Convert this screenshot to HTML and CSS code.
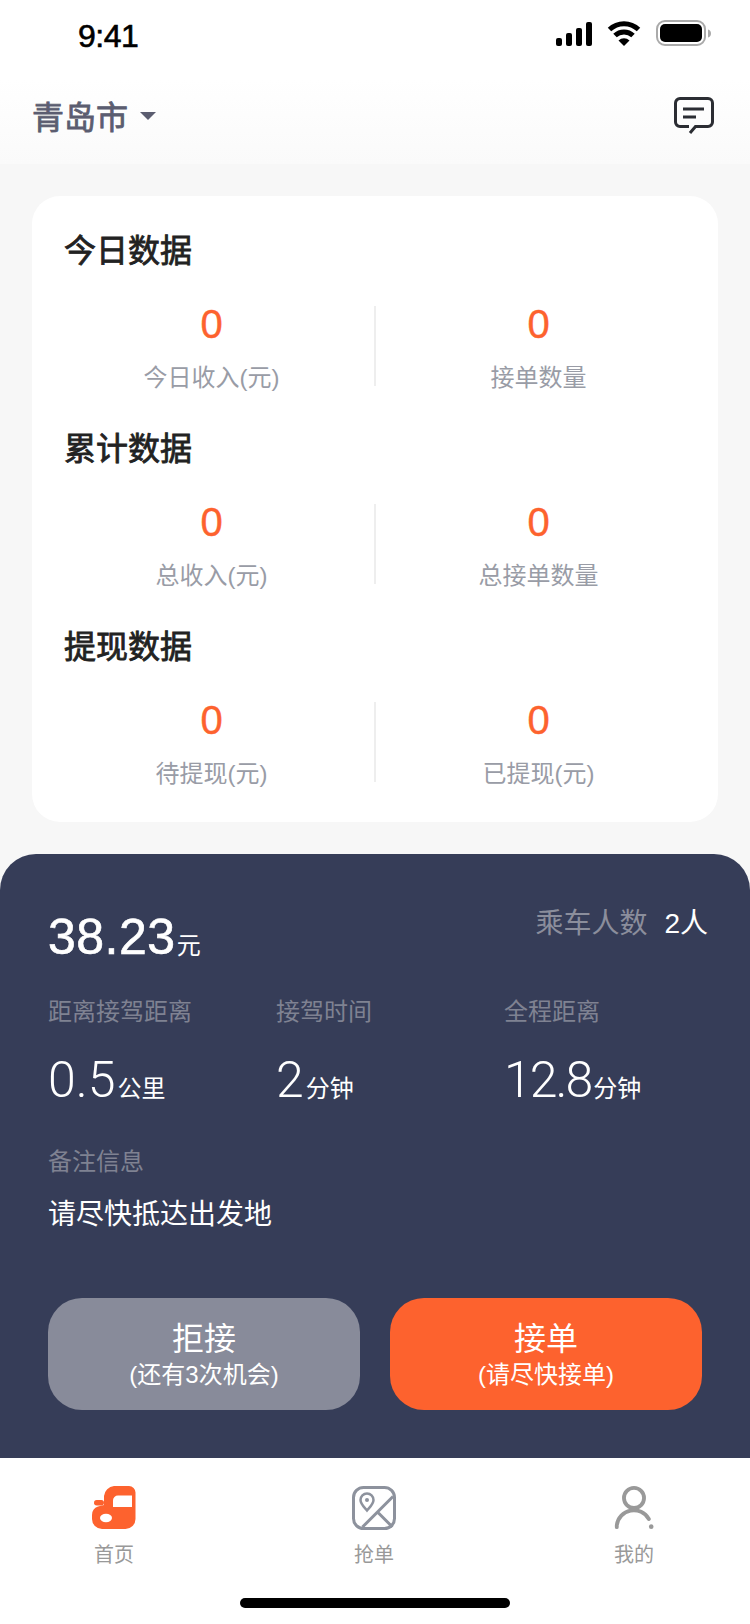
FILE: index.html
```html
<!DOCTYPE html>
<html lang="zh-CN">
	<head>
		<meta charset="UTF-8" />
		<title>首页</title>
		<link rel="stylesheet" href="styles.css">
	</head>
	<body>
		<div class="status-bar">
			<span class="status-time">9:41</span>
			<div class="status-icons">
				<svg width="36" height="26" viewBox="0 0 36 26">
					<rect x="0" y="18" width="6" height="8" rx="2" />
					<rect x="10" y="13" width="6" height="13" rx="2" />
					<rect x="20" y="8" width="6" height="18" rx="2" />
					<rect x="30" y="2" width="6" height="24" rx="2" />
				</svg>
				<svg width="34" height="26" viewBox="0 0 34 26">
					<path d="M2.5 9.5A21 21 0 0 1 31.5 9.5" fill="none" stroke="#000" stroke-width="5" />
					<path d="M8 15.5A13 13 0 0 1 26 15.5" fill="none" stroke="#000" stroke-width="5" />
					<path d="M11.5 20.5A8 8 0 0 1 22.5 20.5L17 26Z" />
				</svg>
				<svg width="55" height="26" viewBox="0 0 55 26">
					<rect x="1" y="1" width="48" height="24" rx="8" fill="none" stroke="#aaa" stroke-width="2" />
					<rect x="4" y="4" width="42" height="18" rx="5" />
					<path d="M52 9.500C54 10 55 11.500 55 13.500S54 17 52 17.500Z" fill="#aaa" />
				</svg>
			</div>
		</div>

		<header class="top-bar">
			<div class="city">
				<span>青岛市</span>
				<i class="city-arrow"></i>
			</div>
			<svg width="40" height="38" viewBox="0 0 40 38" fill="none" stroke="#2b2d33" stroke-width="3">
				<path d="M15 29.500H6A4.500 4.500 0 0 1 1.500 25V6A4.500 4.500 0 0 1 6 1.500H34A4.500 4.500 0 0 1 38.500 6V25A4.500 4.500 0 0 1 34 29.500H21.500L16 36" />
				<path d="M9 12H30M9 20H22" />
			</svg>
		</header>

		<main class="content">
			<section class="data-card">
				<div class="data-group">
					<h2>今日数据</h2>
					<div class="stat-row">
						<div class="stat"><b>0</b><span>今日收入(元)</span></div>
						<i class="stat-line"></i>
						<div class="stat"><b>0</b><span>接单数量</span></div>
					</div>
				</div>
				<div class="data-group">
					<h2>累计数据</h2>
					<div class="stat-row">
						<div class="stat"><b>0</b><span>总收入(元)</span></div>
						<i class="stat-line"></i>
						<div class="stat"><b>0</b><span>总接单数量</span></div>
					</div>
				</div>
				<div class="data-group">
					<h2>提现数据</h2>
					<div class="stat-row">
						<div class="stat"><b>0</b><span>待提现(元)</span></div>
						<i class="stat-line"></i>
						<div class="stat"><b>0</b><span>已提现(元)</span></div>
					</div>
				</div>
			</section>
		</main>

		<section class="order-panel">
			<div class="order-head">
				<div class="order-price">38.23<small>元</small></div>
				<div class="order-people">乘车人数<span>2人</span></div>
			</div>
			<div class="order-metrics">
				<div class="metric">
					<div class="order-label">距离接驾距离</div>
					<div class="metric-value">0.5<small>公里</small></div>
				</div>
				<div class="metric">
					<div class="order-label">接驾时间</div>
					<div class="metric-value">2<small>分钟</small></div>
				</div>
				<div class="metric">
					<div class="order-label">全程距离</div>
					<div class="metric-value metric-tight">12.8<small>分钟</small></div>
				</div>
			</div>
			<div class="order-label note-label">备注信息</div>
			<div class="note-text">请尽快抵达出发地</div>
			<div class="order-actions">
				<button class="action-btn action-reject" type="button">
					<strong>拒接</strong>
					<span>(还有3次机会)</span>
				</button>
				<button class="action-btn action-accept" type="button">
					<strong>接单</strong>
					<span>(请尽快接单)</span>
				</button>
			</div>
		</section>

		<footer class="tab-bar">
			<nav class="tabs">
				<div class="tab">
					<svg width="44" height="44" viewBox="0 0 44 44">
						<path fill="#fd622e" d="M22 0H37A6.500 6.500 0 0 1 43.500 6.500V33A10 10 0 0 1 33.500 43H10A10 10 0 0 1 0 33V29A9 9 0 0 1 6 20.500L12 19V10A11 11 0 0 1 22 0Z" />
						<rect x="2" y="14" width="10" height="5.500" rx="2.700" fill="#fd622e" />
						<path fill="#fff" d="M26 9.500H40V21H21V14.500A5 5 0 0 1 26 9.500Z" />
						<ellipse cx="14" cy="32" rx="6" ry="4.200" fill="#fff" />
					</svg>
					<span>首页</span>
				</div>
				<div class="tab">
					<svg width="44" height="44" viewBox="0 0 44 44" fill="none" stroke="#8d929d" stroke-width="3">
						<rect x="1.500" y="1.500" width="41" height="41" rx="10" />
						<path d="M15 24.500C12 21 8.500 18 8.500 14A6.500 6.500 0 0 1 21.500 14C21.500 18 18 21 15 24.500Z" stroke-width="2.500" />
						<circle cx="15" cy="14" r="2" fill="#8d929d" stroke="none" />
						<path d="M41 10.500L10.500 41M25.500 26L40.500 41" />
					</svg>
					<span>抢单</span>
				</div>
				<div class="tab">
					<svg width="40" height="46" viewBox="0 0 40 46" fill="none" stroke="#999" stroke-width="4">
						<circle cx="20" cy="12.500" r="10.500" />
						<path d="M2 43V41A18 18 0 0 1 35.500 34.500" stroke-linecap="round" />
						<circle cx="38" cy="42.500" r="2.400" fill="#999" stroke="none" />
					</svg>
					<span>我的</span>
				</div>
			</nav>
			<div class="home-bar"></div>
		</footer>
	</body>
</html>
```

FILE: styles.css
```css
* {
	box-sizing: border-box;
}

body {
	margin: 0;
	width: 750px;
	height: 1624px;
	overflow: hidden;
	background: #f7f7f7;
	font-family: 'Liberation Sans', 'Noto Sans CJK SC', sans-serif;
	color: #222;
}

.status-bar {
	display: flex;
	justify-content: space-between;
	height: 80px;
	padding: 20px 39px 0 78px;
	background: #fff;
}

.status-time {
	font-size: 32px;
	line-height: 32px;
	letter-spacing: -0.5px;
	color: #000;
	-webkit-text-stroke: 0.6px #000;
}

.status-icons {
	display: flex;
	gap: 15px;
	height: 26px;
}

.top-bar {
	display: flex;
	justify-content: space-between;
	align-items: center;
	height: 84px;
	padding: 0 36px 12px 32px;
	background: linear-gradient(#fff, #fafafa);
}

.city {
	display: flex;
	align-items: center;
	gap: 12px;
	font-size: 32px;
	line-height: 40px;
	color: #5b5d70;
	-webkit-text-stroke: 0.8px #5b5d70;
}

.city span {
	padding-top: 4px;
}

.city-arrow {
	width: 0;
	height: 0;
	border-left: 8px solid transparent;
	border-right: 8px solid transparent;
	border-top: 8px solid #5b5d70;
}

.content {
	padding: 32px;
}

.data-card {
	height: 626px;
	padding-top: 33px;
	background: #fff;
	border-radius: 28px;
}

.data-group {
	height: 198px;
}

.data-group h2 {
	margin: 0 0 33px;
	padding-left: 32px;
	font-size: 32px;
	font-weight: 400;
	line-height: 44px;
	color: #222;
	-webkit-text-stroke: 0.8px #222;
}

.stat-row {
	display: flex;
	height: 80px;
	padding: 0 17px;
}

.stat {
	flex: 1;
	display: flex;
	flex-direction: column;
	align-items: center;
}

.stat b {
	font-size: 40px;
	font-weight: 400;
	line-height: 36px;
	color: #fd622e;
	-webkit-text-stroke: 0.4px #fd622e;
}

.stat span {
	margin-top: 18px;
	font-size: 24px;
	line-height: 36px;
	color: #999ca6;
}

.stat-line {
	width: 2px;
	background: #eee;
}

.order-panel {
	height: 604px;
	padding: 53px 42px 0 48px;
	background: #363d58;
	border-radius: 36px 36px 0 0;
	color: #fff;
}

.order-head {
	display: flex;
	justify-content: space-between;
}

.order-price {
	font-size: 50px;
	line-height: 60px;
	letter-spacing: 0.5px;
	-webkit-text-stroke: 0.6px #fff;
}

.order-price small {
	margin-left: 1px;
	font-size: 24px;
	line-height: 1;
	-webkit-text-stroke: 0;
}

.order-people {
	padding-top: 2px;
	font-size: 28px;
	line-height: 30px;
	color: #8b8e9c;
}

.order-people span {
	margin-left: 17px;
	color: #fff;
}

.order-metrics {
	display: grid;
	grid-template-columns: 228px 228px 1fr;
	margin-top: 33px;
}

.order-label {
	font-size: 24px;
	line-height: 24px;
	color: #7f8292;
}

.metric-value {
	margin-top: 26px;
	font-family: Roboto, 'Noto Sans CJK SC', sans-serif;
	font-size: 50px;
	font-weight: 300;
	line-height: 60px;
}

.metric-value small {
	margin-left: 2px;
	font-size: 24px;
	font-weight: 400;
	line-height: 1;
	letter-spacing: 0;
}

.metric-tight {
	letter-spacing: -2px;
}

.note-label {
	margin-top: 40px;
}

.note-text {
	margin-top: 21px;
	font-size: 28px;
	line-height: 40px;
}

.order-actions {
	display: grid;
	grid-template-columns: 312px 312px;
	gap: 30px;
	margin-top: 63px;
}

.action-btn {
	display: flex;
	flex-direction: column;
	align-items: center;
	justify-content: center;
	height: 112px;
	padding: 2px 0 0;
	border: none;
	border-radius: 34px;
	font-family: inherit;
	color: #fff;
}

.action-btn strong {
	font-size: 32px;
	font-weight: 400;
	line-height: 40px;
}

.action-btn span {
	font-size: 24px;
	line-height: 32px;
}

.action-reject {
	background: #888b9a;
}

.action-accept {
	background: #fd622e;
}

.tab-bar {
	display: flex;
	flex-direction: column;
	align-items: center;
	height: 166px;
	padding-top: 28px;
	background: #fff;
}

.tabs {
	display: flex;
	gap: 160px;
	width: 100%;
	height: 84px;
	padding-left: 64px;
}

.tab {
	display: flex;
	flex-direction: column;
	align-items: center;
	width: 100px;
}

.tab svg {
	flex: none;
	height: 44px;
}

.tab span {
	margin-top: 13px;
	font-size: 20px;
	line-height: 24px;
	color: #999;
}

.home-bar {
	width: 270px;
	height: 10px;
	margin-top: 28px;
	background: #000;
	border-radius: 5px;
}
```
